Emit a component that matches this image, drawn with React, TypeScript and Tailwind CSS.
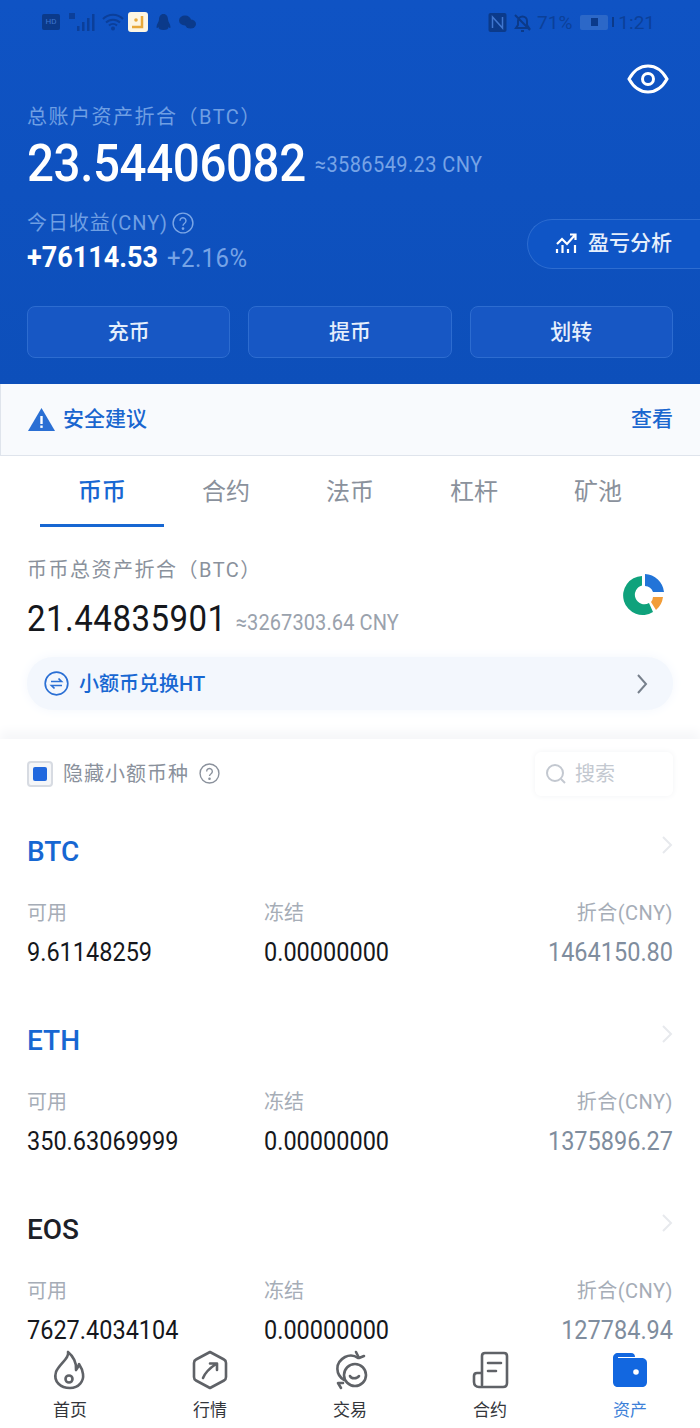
import React from "react";

const StatusBar = () => (
  <div className="flex h-[44px] items-center justify-between pl-[42px] pr-[45px] text-[#0a3f9e]">
    <div className="flex items-center gap-[4px]">
      <div className="flex h-[16px] w-[18px] items-center justify-center rounded-[2px] bg-[#0b3a8a] text-[8px] leading-none text-[#3f76cf]">HD</div>
      <svg width="27" height="20" viewBox="0 0 27 20" fill="#0b3f9a" className="ml-[4px]">
        <rect x="9" y="14" width="2.500" height="5" /><rect x="14" y="10" width="2.500" height="9" /><rect x="19" y="6" width="2.500" height="13" /><rect x="24" y="2" width="2.500" height="17" />
        <rect x="1" y="1" width="6" height="6" />
      </svg>
      <svg width="24" height="18" viewBox="0 0 24 18" fill="none" stroke="#0b3f9a" strokeWidth="2" className="ml-[2px]">
        <path d="M2 6a14 14 0 0 1 20 0M5 9.500a10 10 0 0 1 14 0M8 12.500a6 6 0 0 1 8 0" />
        <circle cx="12" cy="15.500" r="1" fill="#0b3f9a" />
      </svg>
      <svg width="20" height="20" viewBox="0 0 20 20" className="-ml-[1px]">
        <rect width="20" height="20" rx="3" fill="#fdf6e3" />
        <path d="M4 15h10V4" fill="none" stroke="#e8a93a" strokeWidth="2.500" />
        <circle cx="8" cy="8" r="1.800" fill="#e8a93a" />
      </svg>
      <svg width="17" height="20" viewBox="0 0 16 20" fill="#0b3a8a" className="ml-[3px]">
        <path d="M8 2c3 0 4.500 2.500 4.500 5.500 0 2 2.500 5 2.500 7.500 0 1.500-1 1-2 0 0 2-1.500 3-5 3s-5-1-5-3c-1 1-2 1.500-2 0 0-2.500 2.500-5.500 2.500-7.500C3.500 4.500 5 2 8 2z" />
      </svg>
      <svg width="19" height="16" viewBox="0 0 18 16" fill="#0b3a8a" className="ml-[2px]">
        <ellipse cx="6.500" cy="6.500" rx="6" ry="5" /><ellipse cx="12" cy="10" rx="5.500" ry="4.500" />
      </svg>
    </div>
    <div className="flex items-center gap-[5px] text-[19px] leading-none text-[#0b4099]">
      <svg width="19" height="19" viewBox="0 0 18 19" className="mr-[1px]">
        <rect width="18" height="19" rx="2" fill="#0b3a8a" />
        <path d="M4 15V4l10 11V4" fill="none" stroke="#3f76cf" strokeWidth="1.500" />
      </svg>
      <svg width="19" height="19" viewBox="0 0 19 19" fill="none" stroke="#0b3a8a" strokeWidth="2">
        <path d="M3 15h13l-2-3V8a4.500 4.500 0 0 0-9 0v4zM2 2l15 15M8 18h3" />
      </svg>
      <span>71%</span>
      <div className="ml-[3px] flex h-[15px] w-[28px] items-center justify-center rounded-[2px] bg-[#2c68c8]">
        <div className="h-[8px] w-[7px] bg-[#0b3a8a]" />
      </div>
      <div className="-ml-[1px] h-[10px] w-[2px] bg-[#0b3a8a]" />
      <span className="-ml-[1px]">1:21</span>
    </div>
  </div>
);

const Help = ({ color, size = 20 }: { color: string; size?: number }) => (
  <svg width={size} height={size} viewBox="0 0 20 20" fill="none" stroke={color} strokeWidth="1.300">
    <circle cx="10" cy="10" r="9" />
    <path d="M7.300 8a2.700 2.700 0 1 1 4.200 2.200c-1 .7-1.500 1.200-1.500 2.300" />
    <circle cx="10" cy="15" r=".6" fill={color} />
  </svg>
);

const ActionButton = ({ label }: { label: string }) => (
  <button className="flex h-[52px] flex-1 items-center justify-center rounded-[8px] border border-[#2d6cd0] bg-[#1757c4] pt-[2px] text-[21px] font-medium text-[#e6effc]">
    {label}
  </button>
);

const Header = () => (
  <div className="flex h-[384px] flex-col bg-gradient-to-b from-[#0f53c4] to-[#0d4fba]">
    <StatusBar />
    <div className="flex justify-end pr-[31px] pt-[20px]">
      <svg width="42" height="30" viewBox="0 0 42 30" fill="none" stroke="#fff" strokeWidth="3">
        <path d="M2 15C7 6 13 2 21 2s14 4 19 13c-5 9-11 13-19 13S7 24 2 15z" />
        <circle cx="21" cy="15" r="5.500" />
      </svg>
    </div>
    <div className="pl-[27px] pt-[8px] text-[20px] leading-[30px] tracking-[1.5px] text-[#6f9fe3]">总账户资产折合（BTC）</div>
    <div className="flex items-end gap-[9px] pl-[27px] pt-[1px]">
      <span className="scale-y-[1.1] text-[47.5px] font-medium leading-[60px] tracking-[-0.4px] text-white">23.54406082</span>
      <span className="scale-y-[1.1] pb-[14px] text-[20px] leading-[28px] tracking-[0.4px] text-[#76a3e6]">≈3586549.23 CNY</span>
    </div>
    <div className="relative">
      <div className="flex items-center gap-[4px] pl-[27px] pt-[15px] text-[20px] leading-[30px] tracking-[0.9px] text-[#6f9fe3]">
        今日收益(CNY)
        <Help color="#7ba6e6" size={22} />
      </div>
      <div className="flex items-baseline gap-[9px] pl-[27px] pt-[2px]">
        <span className="scale-y-[1.1] text-[27px] font-bold leading-[34px] text-white">+76114.53</span>
        <span className="scale-y-[1.1] text-[24px] leading-[34px] tracking-[0.4px] text-[#76a3e6]">+2.16%</span>
      </div>
      <div className="absolute right-0 top-[26px] flex h-[50px] w-[173px] items-center gap-[9px] rounded-l-[25px] border border-r-0 border-[#2d6cd0] bg-[#0f55c6] pl-[27px] text-[21px] font-medium text-[#e6effc]">
        <svg width="24" height="22" viewBox="0 0 24 22" fill="none" stroke="#fff" strokeWidth="2.200">
          <path d="M2 11l5-5 5 5 8-9M15 1.500h5.500V7" />
          <path d="M2 20v-4M7.500 20v-8M13 20v-4M20 20v-8" />
        </svg>
        盈亏分析
      </div>
    </div>
    <div className="flex gap-[18px] px-[27px] pt-[31px]">
      <ActionButton label="充币" />
      <ActionButton label="提币" />
      <ActionButton label="划转" />
    </div>
  </div>
);

const Banner = () => (
  <div className="flex h-[72px] items-center justify-between border-b border-l border-[#dfe4ec] bg-[#f8fafd] px-[27px] text-[21px] font-medium text-[#1a66cf]">
    <div className="flex items-center gap-[8px]">
      <svg width="27" height="23" viewBox="0 0 27 23">
        <path d="M13.500 0L27 23H0z" fill="#2a6fd4" />
        <rect x="12.300" y="8" width="2.400" height="8" fill="#fff" />
        <rect x="12.300" y="17.500" width="2.400" height="2.400" fill="#fff" />
      </svg>
      安全建议
    </div>
    <span>查看</span>
  </div>
);

const Tabs = () => (
  <div className="flex h-[71px] px-[40px] text-[24px]">
    {["币币", "合约", "法币", "杠杆", "矿池"].map((t, i) => (
      <div
        key={t}
        className={
          i === 0
            ? "flex w-[124px] items-center justify-center border-b-[3px] border-[#1767d2] pt-[3px] font-medium text-[#1767d2]"
            : "flex w-[124px] items-center justify-center border-b-[3px] border-transparent pt-[3px] text-[#8a919c]"
        }
      >
        {t}
      </div>
    ))}
  </div>
);

const Donut = () => (
  <svg width="42" height="42" viewBox="0 0 42 42" className="mb-[6px] mr-[8px]">
    <path d="M19 3A19.500 19.500 0 1 0 30 39L26 30A9.500 9.500 0 1 1 19 12.500z" fill="#0fa27c" />
    <path d="M22 1A20 20 0 0 1 41 19L30 19A9 9 0 0 0 22 13z" fill="#2274d8" />
    <path d="M40 24A20 20 0 0 1 33 37L28 29A9 9 0 0 0 30 24z" fill="#f29d38" />
  </svg>
);

const Summary = () => (
  <div className="px-[27px] pt-[28px]">
    <div className="flex items-center justify-between">
      <div>
        <div className="text-[20px] leading-[30px] tracking-[1.5px] text-[#8a919c]">币币总资产折合（BTC）</div>
        <div className="flex items-end gap-[9px] pt-[14px]">
          <span className="scale-y-[1.1] text-[33px] leading-[40px] tracking-[0.5px] text-[#15171c]">21.44835901</span>
          <span className="scale-y-[1.1] pb-[3px] text-[20px] leading-[28px] tracking-[0.1px] text-[#9aa2ad]">≈3267303.64 CNY</span>
        </div>
      </div>
      <Donut />
    </div>
    <div className="mt-[18px] flex h-[53px] items-center justify-between rounded-[26px] bg-[#f3f7fd] pl-[17px] pr-[24px] shadow-[0_0_12px_#f3f7fd]">
      <div className="flex items-center gap-[10px] text-[20px] font-medium text-[#1767d2]">
        <svg width="25" height="25" viewBox="0 0 25 25" fill="none" stroke="#2a6fd4" strokeWidth="1.700">
          <circle cx="12.500" cy="12.500" r="11.300" />
          <path d="M7 10.500h10.500L14.500 7.500M18 14.500H7.500l3 3" />
        </svg>
        小额币兑换HT
      </div>
      <svg width="14" height="22" viewBox="0 0 14 22" fill="none" stroke="#77808c" strokeWidth="2">
        <path d="M3 2l8 9-8 9" />
      </svg>
    </div>
  </div>
);

const Filter = () => (
  <div className="mt-[29px] flex h-[69px] items-center justify-between bg-white px-[27px] shadow-[0_-8px_10px_#f6f7f9]">
    <div className="flex items-center gap-[10px] text-[20px] text-[#8a919c]">
      <div className="flex h-[26px] w-[26px] items-center justify-center rounded-[4px] border-2 border-[#d7dbe2] bg-[#f5f6f8]">
        <div className="h-[14px] w-[14px] rounded-[2px] bg-[#2168de]" />
      </div>
      <span className="tracking-[1px]">隐藏小额币种</span>
      <Help color="#8a919c" size={21} />
    </div>
    <div className="flex h-[44px] w-[138px] items-center gap-[8px] rounded-[6px] bg-white pl-[10px] text-[20px] text-[#c3c8d0] shadow-[0_0_6px_#f2f3f5]">
      <svg width="22" height="22" viewBox="0 0 22 22" fill="none" stroke="#c3c8d0" strokeWidth="2">
        <circle cx="10" cy="10" r="8" />
        <path d="M16 16l4 4" />
      </svg>
      搜索
    </div>
  </div>
);

const assets = [
  { name: "BTC", blue: true, avail: "9.61148259", frozen: "0.00000000", cny: "1464150.80" },
  { name: "ETH", blue: true, avail: "350.63069999", frozen: "0.00000000", cny: "1375896.27" },
  { name: "EOS", blue: false, avail: "7627.4034104", frozen: "0.00000000", cny: "127784.94" },
];

const AssetRow = ({ a }: { a: (typeof assets)[number] }) => (
  <div className="flex h-[189px] flex-col px-[27px] pt-[24px]">
    <div className="flex items-start justify-between">
      <span className={a.blue ? "text-[28px] font-medium leading-[40px] text-[#1767d2]" : "text-[28px] font-medium leading-[40px] text-[#1c2028]"}>
        {a.name}
      </span>
      <svg width="12" height="20" viewBox="0 0 12 20" fill="none" stroke="#e7e9ed" strokeWidth="2" className="mt-[3px]">
        <path d="M2 2l8 8-8 8" />
      </svg>
    </div>
    <div className="mt-[28px] grid grid-cols-[237px_1fr_auto] text-[20px] leading-[26px] text-[#a6adb7]">
      <span>可用</span>
      <span>冻结</span>
      <span className="tracking-[0.5px]">折合(CNY)</span>
    </div>
    <div className="mt-[15px] grid grid-cols-[237px_1fr_auto] text-[23.5px] leading-[22px] text-[#15171c]">
      <span className="scale-y-[1.08]">{a.avail}</span>
      <span className="scale-y-[1.08]">{a.frozen}</span>
      <span className="scale-y-[1.08] text-[#7f8d9e]">{a.cny}</span>
    </div>
  </div>
);

const StrokeIcon = ({ children }: { children: React.ReactNode }) => (
  <svg width="38" height="40" viewBox="0 0 38 40" fill="none" stroke="#5f6267" strokeWidth="2.600" strokeLinecap="round" strokeLinejoin="round">
    {children}
  </svg>
);

const navItems: { label: string; active?: boolean; icon: React.ReactNode }[] = [
  {
    label: "首页",
    icon: (
      <StrokeIcon>
        <path d="M17 2C19 8 8 14 5 22 2 32 10 38 19 38 28 38 33 31 32 24 31.500 20 30 17 28 14 28 17 26 19 25 20 26 13 22 6 17 2Z" />
        <circle cx="18" cy="29" r="3.500" />
      </StrokeIcon>
    ),
  },
  {
    label: "行情",
    icon: (
      <StrokeIcon>
        <path d="M19 2L33 9.500Q35 10.500 35 13V27Q35 29.500 33 30.500L19 38 5 30.500Q3 29.500 3 27V13Q3 10.500 5 9.500Z" />
        <path d="M12 28C14 23 19 18 25 14M19 13.500H26V20" />
      </StrokeIcon>
    ),
  },
  {
    label: "交易",
    icon: (
      <StrokeIcon>
        <circle cx="24" cy="25" r="11" />
        <path d="M19 26c1 3 7 3 9 0" />
        <path d="M13 30C5 25 3 13 14 7c4-2 9-2 13 1" />
        <path d="M25 2l3 6 5-2M10 38l-3-5 5 0" />
      </StrokeIcon>
    ),
  },
  {
    label: "合约",
    icon: (
      <StrokeIcon>
        <path d="M11 23V6c0-2 1-3 3-3h19c1.500 0 3 1 3 3v27c0 3-2 4-4 4H8c-3 0-5-2-5-5v-6c0-2 1-3 3-3h5v12" />
        <path d="M17 13h13M17 21h8" />
      </StrokeIcon>
    ),
  },
  {
    label: "资产",
    active: true,
    icon: (
      <svg width="38" height="40" viewBox="0 0 38 40">
        <path d="M2 8C2 5 4 3 7 3H20C23 3 24 5 24 7H7V8H30C34 8 36 10 36 13V32C36 35 34 37 31 37H7C4 37 2 35 2 32Z" fill="#1267e0" />
        <circle cx="25" cy="22" r="2.800" fill="#fff" />
      </svg>
    ),
  },
];

const BottomNav = () => (
  <div className="flex h-[86px] bg-white pt-[8px]">
    {navItems.map((n) => (
      <div key={n.label} className="flex flex-1 flex-col items-center">
        {n.icon}
        <span className={n.active ? "mt-[8px] text-[17px] leading-[24px] text-[#3c7fd8]" : "mt-[8px] text-[17px] leading-[24px] text-[#33363b]"}>{n.label}</span>
      </div>
    ))}
  </div>
);

export default function App() {
  return (
    <div className="flex h-[1428px] w-[700px] flex-col overflow-hidden bg-white [font-family:Roboto,'Noto_Sans_CJK_SC',sans-serif]">
      <Header />
      <Banner />
      <Tabs />
      <Summary />
      <Filter />
      <div className="min-h-0 flex-1">
        {assets.map((a) => (
          <AssetRow key={a.name} a={a} />
        ))}
      </div>
      <BottomNav />
    </div>
  );
}
